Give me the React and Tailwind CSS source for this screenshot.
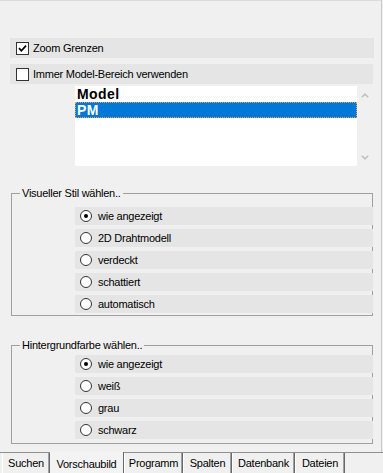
import React from 'react';

const tabs = [
  { label: 'Suchen', w: 'w-[48px]' },
  { label: 'Vorschaubild', w: 'w-[74px]', active: true },
  { label: 'Programm', w: 'w-[59px]' },
  { label: 'Spalten', w: 'w-[49px]' },
  { label: 'Datenbank', w: 'w-[63px]' },
  { label: 'Dateien', w: 'w-[50px]' },
];

const CheckBox = ({ checked }) => (
  <span className="flex h-[13px] w-[13px] shrink-0 items-center justify-center border border-[#333] bg-white">
    {checked && (
      <svg width="9" height="9" viewBox="0 0 9 9">
        <path d="M1 4.2 L3.4 6.8 L8 1.6" stroke="#000" strokeWidth="1.7" fill="none" />
      </svg>
    )}
  </span>
);

const Radio = ({ checked }) => (
  <span className="flex h-[12px] w-[12px] shrink-0 items-center justify-center rounded-full border border-[#333] bg-white">
    {checked && <span className="h-[4px] w-[4px] rounded-full bg-black" />}
  </span>
);

const RadioRow = ({ label, checked }) => (
  <div className="-mr-px ml-[63px] flex h-[18px] items-center gap-[6px] bg-[#e5e5e5] pl-[5px]">
    <Radio checked={checked} />
    <span>{label}</span>
  </div>
);

const Group = ({ title, options, top, bottom }) => (
  <fieldset className={`mx-[11px] w-[362px] border border-[#a0a0a0] ${bottom}`}>
    <legend className="ml-[8px] px-[2px] leading-[13px]">{title}</legend>
    <div className={`flex flex-col gap-[4px] ${top}`}>
      {options.map((o, i) => (
        <RadioRow key={o} label={o} checked={i === 0} />
      ))}
    </div>
  </fieldset>
);

export default function App() {
  return (
    <div className="flex h-[473px] w-[383px] flex-col overflow-hidden bg-[#f0f0f0] font-['Liberation_Sans',Arial,sans-serif] text-[11px] tracking-[-0.25px] text-black">
      <div className="flex w-[382px] flex-1 flex-col border-t border-r border-t-[#dadada] border-r-[#c8c8c8]">
        <div className="ml-[10px] mt-[37px] flex h-[20px] w-[364px] items-center gap-[4px] bg-[#e5e5e5] pl-[6px]">
          <CheckBox checked />
          <span>Zoom Grenzen</span>
        </div>
        <div className="ml-[10px] mt-[6px] flex h-[20px] w-[363px] items-center gap-[4px] bg-[#e5e5e5] pl-[6px]">
          <CheckBox />
          <span>Immer Model-Bereich verwenden</span>
        </div>

        <div className="ml-[75px] mt-[2px] flex h-[80px] w-[298px]">
          <div className="w-[282px] bg-white text-[14px] font-bold leading-[16px] tracking-[0.4px]">
            <div className="h-[16px] pl-[2px]">Model</div>
            <div className="h-[16px] bg-[#0078d7] pl-[2px] text-white outline-1 -outline-offset-1 outline-dotted outline-[#f0a050]">PM</div>
          </div>
          <div className="flex w-[16px] flex-col items-center justify-between pt-[7px] pb-[6px]">
            <svg width="8" height="5" viewBox="0 0 8 5">
              <path d="M0.8 4.3 L4 1.2 L7.2 4.3" stroke="#c0c0c0" strokeWidth="1.6" fill="none" />
            </svg>
            <svg width="8" height="5" viewBox="0 0 8 5">
              <path d="M0.8 0.7 L4 3.8 L7.2 0.7" stroke="#c0c0c0" strokeWidth="1.6" fill="none" />
            </svg>
          </div>
        </div>

        <div className="mt-[21px]">
          <Group
            title="Visueller Stil wählen.."
            options={['wie angezeigt', '2D Drahtmodell', 'verdeckt', 'schattiert', 'automatisch']}
            top="mt-[7px]"
            bottom="pb-[2px]"
          />
        </div>
        <div className="mt-[23px]">
          <Group
            title="Hintergrundfarbe wählen.."
            options={['wie angezeigt', 'weiß', 'grau', 'schwarz']}
            top="mt-[3px]"
            bottom="pb-[4px]"
          />
        </div>
      </div>

      <div className="flex h-[21px] shrink-0 items-stretch border-t border-[#8f8f8f] pl-[2px]">
        {tabs.map((t) =>
          t.active ? (
            <div
              key={t.label}
              className={`${t.w} -mt-px flex h-[22px] items-center justify-center border-r border-r-[#696969] bg-[#f3f3f3] pt-[3px]`}
            >
              {t.label}
            </div>
          ) : (
            <div
              key={t.label}
              className={`${t.w} flex items-center justify-center border-l border-r border-l-white border-r-[#696969] shadow-[inset_-1px_0_0_#a0a0a0]`}
            >
              {t.label}
            </div>
          )
        )}
      </div>
    </div>
  );
}
